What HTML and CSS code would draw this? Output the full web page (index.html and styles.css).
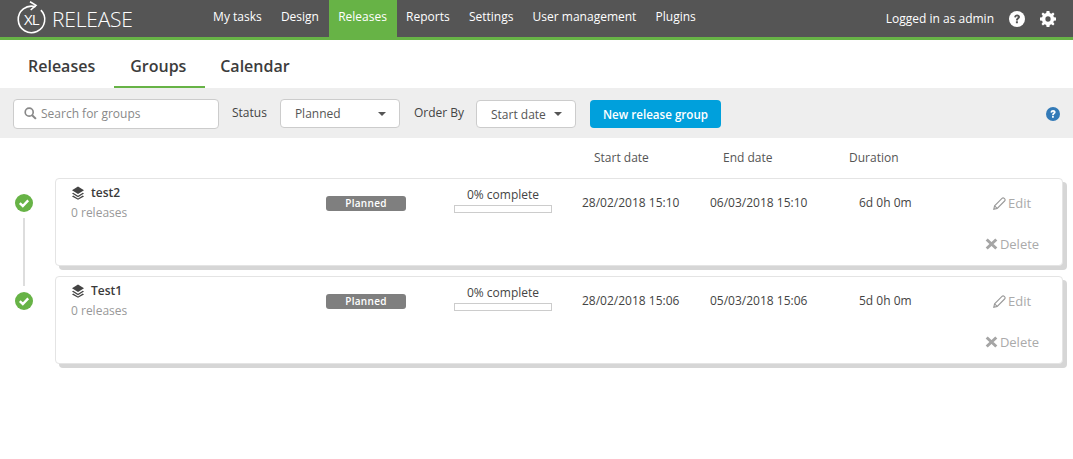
FILE: index.html
```html
<!DOCTYPE html>
<html lang="en">
<head>
    <meta charset="UTF-8">
    <meta name="viewport" content="width=device-width, initial-scale=1.0">
    <title>Groups | XL Release</title>
    <link rel="stylesheet" href="styles.css">
</head>
<body>
    <header class="topbar">
        <div class="logo">
            <svg class="logo-mark" width="32" height="37" viewBox="0 0 32 37">
                <path d="M23.9 10.1 A13.25 13.25 0 1 1 18.5 6.8" fill="none" stroke="#fff" stroke-width="1.6"/>
                <path d="M13 1.7 L19 5.3 L13.7 10" fill="none" stroke="#fff" stroke-width="1.6"/>
                <text x="7" y="25" class="logo-xl">XL</text>
            </svg>
            <span class="logo-text">RELEASE</span>
        </div>
        <nav class="main-nav">
            <a>My tasks</a>
            <a>Design</a>
            <a class="active">Releases</a>
            <a>Reports</a>
            <a>Settings</a>
            <a>User management</a>
            <a>Plugins</a>
        </nav>
        <div class="user-area">
            <span>Logged in as admin</span>
            <svg class="user-help" width="16" height="16" viewBox="0 0 16 16">
                <circle cx="8" cy="8" r="8" fill="#fff"/>
                <path d="M5.2 6.2 C5.3 4.4 6.6 3.5 8.1 3.5 C9.7 3.5 11 4.5 11 6 C11 7.9 8.9 7.8 8.9 9.4 L6.9 9.4 C6.9 7.2 8.8 7.2 8.8 6.1 C8.8 5.6 8.5 5.3 8 5.3 C7.5 5.3 7.1 5.7 7 6.5 Z M6.9 10.3 H8.9 V12.3 H6.9 Z" fill="#555"/>
            </svg>
            <svg class="user-gear" width="16" height="16" viewBox="0 0 17 17">
                <path fill="#fff" fill-rule="evenodd" d="M7 0 H10 L10.4 2.2 L12 2.9 L13.9 1.6 L15.4 3.1 L14.1 5 L14.8 6.6 L17 7 V10 L14.8 10.4 L14.1 12 L15.4 13.9 L13.9 15.4 L12 14.1 L10.4 14.8 L10 17 H7 L6.6 14.8 L5 14.1 L3.1 15.4 L1.6 13.9 L2.9 12 L2.2 10.4 L0 10 V7 L2.2 6.6 L2.9 5 L1.6 3.1 L3.1 1.6 L5 2.9 L6.6 2.2 Z M8.5 5.7 A2.8 2.8 0 1 0 8.5 11.3 A2.8 2.8 0 1 0 8.5 5.7 Z"/>
            </svg>
        </div>
    </header>

    <div class="tabs">
        <a>Releases</a>
        <a class="active">Groups</a>
        <a>Calendar</a>
    </div>

    <div class="toolbar">
        <div class="search">
            <svg width="13" height="13" viewBox="0 0 14 14">
                <circle cx="5.6" cy="5.6" r="4.3" fill="none" stroke="#888" stroke-width="1.8"/>
                <path d="M8.8 8.8 L12.8 12.8" stroke="#888" stroke-width="2.2"/>
            </svg>
            <span>Search for groups</span>
        </div>
        <label class="field-label">Status</label>
        <div class="select select-status"><span>Planned</span><i class="caret"></i></div>
        <label class="field-label field-order">Order By</label>
        <div class="select select-order"><span>Start date</span><i class="caret"></i></div>
        <button class="new-btn">New release group</button>
        <svg class="toolbar-help" width="14" height="14" viewBox="0 0 16 16">
            <circle cx="8" cy="8" r="8" fill="#337ab7"/>
            <path d="M5.2 6.2 C5.3 4.4 6.6 3.5 8.1 3.5 C9.7 3.5 11 4.5 11 6 C11 7.9 8.9 7.8 8.9 9.4 L6.9 9.4 C6.9 7.2 8.8 7.2 8.8 6.1 C8.8 5.6 8.5 5.3 8 5.3 C7.5 5.3 7.1 5.7 7 6.5 Z M6.9 10.3 H8.9 V12.3 H6.9 Z" fill="#fff"/>
        </svg>
    </div>

    <div class="col-heads">
        <span class="head-start">Start date</span>
        <span class="head-end">End date</span>
        <span>Duration</span>
    </div>

    <main class="groups">
        <div class="group-row">
            <div class="marker">
                <svg class="check" width="18" height="18" viewBox="0 0 18 18">
                    <circle cx="9" cy="9" r="9" fill="#67b346"/>
                    <path d="M4.8 9.2 L7.8 12 L13.2 6.4" fill="none" stroke="#fff" stroke-width="2.4"/>
                </svg>
                <div class="marker-line"></div>
            </div>
            <div class="card">
                <div class="card-info">
                    <div class="card-title">
                        <svg width="14" height="14" viewBox="0 0 14 14">
                            <path d="M7 0.5 L13 4.2 L7 7.9 L1 4.2 Z" fill="#444"/>
                            <path d="M2.2 6.8 L1 7.6 L7 11.2 L13 7.6 L11.8 6.8 L7 9.7 Z M2.2 9.6 L1 10.4 L7 13.8 L13 10.4 L11.8 9.6 L7 12.5 Z" fill="#444"/>
                        </svg>
                        <span>test2</span>
                    </div>
                    <div class="card-count">0 releases</div>
                </div>
                <div class="badge">Planned</div>
                <div class="progress">
                    <div class="progress-label">0% complete</div>
                    <div class="progress-bar"></div>
                </div>
                <div class="cell cell-start">28/02/2018 15:10</div>
                <div class="cell cell-end">06/03/2018 15:10</div>
                <div class="cell cell-duration">6d 0h 0m</div>
                <div class="actions">
                    <a class="action-edit">
                        <svg width="13" height="13" viewBox="0 0 13 13"><path d="M0.8 12.2 L1.6 8.8 L9 1.4 C9.7 0.7 10.5 0.7 11.2 1.4 L11.7 1.9 C12.3 2.5 12.3 3.3 11.6 4 L4.2 11.4 Z M1.6 8.8 L4.2 11.4" fill="none" stroke="#999" stroke-width="1.1"/></svg>
                        Edit
                    </a>
                    <a class="action-delete">
                        <svg width="13" height="12" viewBox="0 0 13 12"><path d="M1.7 1.5 L11.3 10.5 M11.3 1.5 L1.7 10.5" stroke="#a5a5a5" stroke-width="3"/></svg>
                        Delete
                    </a>
                </div>
            </div>
        </div>

        <div class="group-row">
            <div class="marker">
                <svg class="check" width="18" height="18" viewBox="0 0 18 18">
                    <circle cx="9" cy="9" r="9" fill="#67b346"/>
                    <path d="M4.8 9.2 L7.8 12 L13.2 6.4" fill="none" stroke="#fff" stroke-width="2.4"/>
                </svg>
            </div>
            <div class="card">
                <div class="card-info">
                    <div class="card-title">
                        <svg width="14" height="14" viewBox="0 0 14 14">
                            <path d="M7 0.5 L13 4.2 L7 7.9 L1 4.2 Z" fill="#444"/>
                            <path d="M2.2 6.8 L1 7.6 L7 11.2 L13 7.6 L11.8 6.8 L7 9.7 Z M2.2 9.6 L1 10.4 L7 13.8 L13 10.4 L11.8 9.6 L7 12.5 Z" fill="#444"/>
                        </svg>
                        <span>Test1</span>
                    </div>
                    <div class="card-count">0 releases</div>
                </div>
                <div class="badge">Planned</div>
                <div class="progress">
                    <div class="progress-label">0% complete</div>
                    <div class="progress-bar"></div>
                </div>
                <div class="cell cell-start">28/02/2018 15:06</div>
                <div class="cell cell-end">05/03/2018 15:06</div>
                <div class="cell cell-duration">5d 0h 0m</div>
                <div class="actions">
                    <a class="action-edit">
                        <svg width="13" height="13" viewBox="0 0 13 13"><path d="M0.8 12.2 L1.6 8.8 L9 1.4 C9.7 0.7 10.5 0.7 11.2 1.4 L11.7 1.9 C12.3 2.5 12.3 3.3 11.6 4 L4.2 11.4 Z M1.6 8.8 L4.2 11.4" fill="none" stroke="#999" stroke-width="1.1"/></svg>
                        Edit
                    </a>
                    <a class="action-delete">
                        <svg width="13" height="12" viewBox="0 0 13 12"><path d="M1.7 1.5 L11.3 10.5 M11.3 1.5 L1.7 10.5" stroke="#a5a5a5" stroke-width="3"/></svg>
                        Delete
                    </a>
                </div>
            </div>
        </div>
    </main>
</body>
</html>
```

FILE: styles.css
```css
* {
    box-sizing: border-box;
}

body {
    margin: 0;
    font-family: "Open Sans", "Liberation Sans", sans-serif;
    font-size: 12px;
    color: #333;
    background: #fff;
}

/* top bar */
.topbar {
    display: flex;
    height: 40px;
    background: #555;
    border-bottom: 3px solid #67b346;
    color: #fff;
}

.logo {
    display: flex;
    flex: none;
    align-items: center;
    width: 203.5px;
    padding-left: 17px;
}

.logo-mark {
    flex: none;
}

.logo-xl {
    font-size: 15px;
    fill: #fff;
    letter-spacing: -0.8px;
}

.logo-text {
    margin-left: 3px;
    font-size: 21px;
    font-weight: 300;
    letter-spacing: -0.2px;
}

.main-nav {
    display: flex;
}

.main-nav a {
    height: 37px;
    padding: 0 9.6px;
    line-height: 33px;
}

.main-nav a.active {
    background: #67b346;
}

.user-area {
    display: flex;
    align-items: center;
    margin-left: auto;
    padding-right: 17px;
}

.user-help {
    margin-left: 15px;
}

.user-gear {
    margin-left: 15px;
}

/* tabs */
.tabs {
    display: flex;
    height: 48px;
    padding-left: 14px;
}

.tabs a {
    padding: 0 14px;
    font-size: 16px;
    font-weight: 600;
    line-height: 52px;
    color: #3c3c3c;
}

.tabs a.active {
    width: 91px;
    margin-left: 5px;
    padding: 0 0 0 16px;
    border-bottom: 2px solid #67b346;
}

.tabs a:last-child {
    padding-left: 15px;
}

/* toolbar */
.toolbar {
    display: flex;
    align-items: flex-start;
    height: 50px;
    padding: 11px 13px 0;
    background: #eee;
}

.search {
    display: flex;
    align-items: center;
    gap: 4px;
    width: 206px;
    height: 30px;
    padding: 0 0 1px 10px;
    background: #fff;
    border: 1px solid #ccc;
    border-radius: 4px;
    color: #888;
}

.field-label {
    margin: 0 13px 0 13px;
    line-height: 28px;
    color: #444;
}

.field-order {
    margin: 0 12px 0 14px;
}

.select {
    display: flex;
    align-items: center;
    justify-content: space-between;
    padding: 0 13px 0 14px;
    background: #fff;
    border: 1px solid #ccc;
    border-radius: 4px;
    color: #555;
}

.select-status {
    width: 120px;
    height: 29px;
}

.select-order {
    width: 100px;
    height: 28px;
    margin-top: 1px;
}

.caret {
    width: 0;
    height: 0;
    border-left: 4px solid transparent;
    border-right: 4px solid transparent;
    border-top: 4px solid #555;
}

.new-btn {
    width: 131px;
    height: 28px;
    margin: 1px 0 0 14px;
    padding: 0;
    background: #00a0dc;
    border: none;
    border-radius: 4px;
    color: #fff;
    font-family: inherit;
    font-size: 11.6px;
    font-weight: 600;
}

.toolbar-help {
    margin: 8px 0 0 auto;
}

/* column headings */
.col-heads {
    display: flex;
    height: 40px;
    padding-left: 594px;
    line-height: 39px;
    color: #555;
}

.head-start {
    width: 129px;
}

.head-end {
    width: 126px;
}

/* group rows */
.group-row {
    display: flex;
    height: 98px;
}

.marker {
    display: flex;
    flex-direction: column;
    align-items: center;
    flex: none;
    width: 48px;
    margin-right: 7px;
    padding-top: 16px;
}

.check {
    flex: none;
}

.marker-line {
    flex: none;
    width: 2px;
    height: 68px;
    margin-top: 6px;
    background: #ddd;
}

.card {
    display: flex;
    width: 1008px;
    height: 88px;
    background: #fff;
    border: 1px solid #e4e4e4;
    border-radius: 4px;
    box-shadow: 4px 4px 0 #d6d6d6;
}

.card-info {
    flex: none;
    width: 270px;
    padding: 5px 0 0 15px;
}

.card-title {
    display: flex;
    align-items: center;
    gap: 6px;
    font-weight: 600;
    line-height: 18px;
    color: #3a3a3a;
}

.card-count {
    margin-top: 2px;
    line-height: 18px;
    color: #999;
}

.badge {
    flex: none;
    width: 80px;
    height: 15px;
    margin-top: 17px;
    background: #7f7f7f;
    border-radius: 3px;
    color: #fff;
    font-size: 10px;
    font-weight: 600;
    letter-spacing: 0.3px;
    line-height: 15px;
    text-align: center;
}

.progress {
    flex: none;
    width: 98px;
    margin: 7px 30px 0 48px;
    text-align: center;
}

.progress-label {
    line-height: 18px;
    color: #444;
}

.progress-bar {
    height: 8px;
    margin-top: 1px;
    border: 1px solid #ccc;
}

.cell {
    flex: none;
    padding-top: 15px;
    line-height: 18px;
    color: #444;
}

.cell-start {
    width: 128px;
}

.cell-end {
    width: 149px;
}

.cell-duration {
    width: 100px;
}

.actions {
    display: flex;
    flex-direction: column;
    align-items: center;
    flex: none;
    width: 96px;
    margin-left: 5px;
    padding-top: 15px;
    font-size: 13px;
    color: #aaa;
}

.actions a {
    display: flex;
    align-items: center;
    gap: 2px;
    line-height: 18px;
}

.action-delete {
    margin-top: 23px;
}
```
